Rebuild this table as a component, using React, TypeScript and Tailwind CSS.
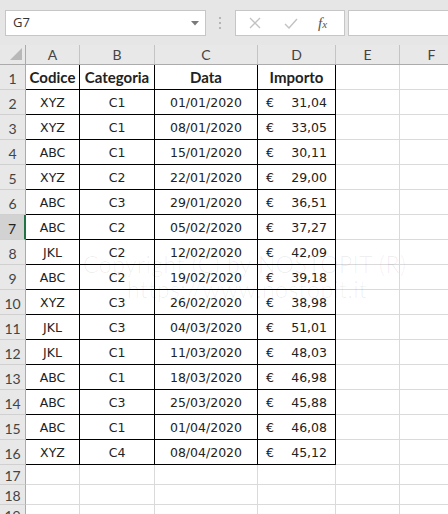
const rows = [
  ['XYZ', 'C1', '01/01/2020', '31,04'],
  ['XYZ', 'C1', '08/01/2020', '33,05'],
  ['ABC', 'C1', '15/01/2020', '30,11'],
  ['XYZ', 'C2', '22/01/2020', '29,00'],
  ['ABC', 'C3', '29/01/2020', '36,51'],
  ['ABC', 'C2', '05/02/2020', '37,27'],
  ['JKL', 'C2', '12/02/2020', '42,09'],
  ['ABC', 'C2', '19/02/2020', '39,18'],
  ['XYZ', 'C3', '26/02/2020', '38,98'],
  ['JKL', 'C3', '04/03/2020', '51,01'],
  ['JKL', 'C1', '11/03/2020', '48,03'],
  ['ABC', 'C1', '18/03/2020', '46,98'],
  ['ABC', 'C3', '25/03/2020', '45,88'],
  ['ABC', 'C1', '01/04/2020', '46,08'],
  ['XYZ', 'C4', '08/04/2020', '45,12'],
]

const letters = ['A', 'B', 'C', 'D', 'E', 'F']
const widths = ['w-[54px]', 'w-[75px]', 'w-[103px]', 'w-[78px]', 'w-[64px]', 'w-[64px]']

function RowHead({ n, selected }: { n: number; selected?: boolean }) {
  return (
    <div
      className={`w-[26px] shrink-0 flex items-center justify-center pt-[2px] text-[14px] font-['Lato'] border-b border-[#d0d0d0] ${
        selected ? 'bg-[#d2d2d2] border-r-2 border-r-[#217346] text-[#222]' : 'bg-[#e8e8e8] border-r border-r-[#ababab] text-[#444]'
      }`}
    >
      {n}
    </div>
  )
}

function EmptyCells({ from }: { from: number }) {
  return (
    <>
      {widths.slice(from).map((w, i) => (
        <div key={i} className={`${w} shrink-0 border-r border-b border-[#dadada]`} />
      ))}
    </>
  )
}

export default function App() {
  return (
    <div className="w-[448px] h-[514px] overflow-hidden bg-white relative font-['DejaVu_Sans'] text-[#222]">
      {/* Formula bar */}
      <div className="h-[45px] bg-[#e6e6e6] flex items-start pt-[10px] pl-[5px]">
        <div className="w-[201px] h-[26px] bg-white border border-[#c6c6c6] flex items-center justify-between pl-[7px] pr-[6px]">
          <span className="text-[13px] font-['Open_Sans'] text-[#333]">G7</span>
          <svg width="8" height="5" viewBox="0 0 8 5">
            <polygon points="0,0 8,0 4,4.5" fill="#7a7a7a" />
          </svg>
        </div>
        <div className="ml-[13px] mt-[7px] flex flex-col gap-[3px]">
          <div className="w-[2px] h-[2px] bg-[#b5b5b5]" />
          <div className="w-[2px] h-[2px] bg-[#b5b5b5]" />
          <div className="w-[2px] h-[2px] bg-[#b5b5b5]" />
        </div>
        <div className="ml-[14px] w-[110px] h-[26px] bg-white border border-[#c6c6c6] flex items-center">
          <svg className="ml-[13px]" width="12" height="12" viewBox="0 0 12 12">
            <path d="M1 1 L11 11 M11 1 L1 11" stroke="#c2c2c2" strokeWidth="1.3" />
          </svg>
          <svg className="ml-[23px]" width="14" height="11" viewBox="0 0 14 11">
            <path d="M1 6 L5 10 L13 1" stroke="#c2c2c2" strokeWidth="1.4" fill="none" />
          </svg>
          <span className="ml-[20px] font-['Liberation_Serif'] italic text-[15px] text-[#555] leading-none">
            f<span className="text-[11px]">x</span>
          </span>
        </div>
        <div className="ml-[3px] flex-1 h-[26px] bg-white border border-[#c6c6c6] border-r-0" />
      </div>

      {/* Column headers */}
      <div className="flex h-[20px] bg-[#e8e8e8] border-b border-[#ababab]">
        <div className="w-[26px] shrink-0 border-r border-[#ababab] relative">
          <svg className="absolute left-[10px] top-[3px]" width="12" height="12" viewBox="0 0 12 12">
            <polygon points="12,0 12,12 0,12" fill="#b8b8b8" />
          </svg>
        </div>
        {letters.map((l, i) => (
          <div key={l} className={`${widths[i]} shrink-0 border-r border-[#c4c4c4] flex items-center justify-center text-[14px] font-['Lato'] text-[#444]`}>
            {l}
          </div>
        ))}
      </div>

      {/* Header row */}
      <div className="flex h-[25px]">
        <RowHead n={1} />
        <div className="w-[54px] shrink-0 border-r border-b border-black flex items-center justify-center font-['Lato'] font-bold text-[15px] pt-[1px]">Codice</div>
        <div className="w-[75px] shrink-0 border-r border-b border-black flex items-center justify-center font-['Lato'] font-bold text-[15px] pt-[1px]">Categoria</div>
        <div className="w-[103px] shrink-0 border-r border-b border-black flex items-center justify-center font-['Lato'] font-bold text-[15px] pt-[1px]">Data</div>
        <div className="w-[78px] shrink-0 border-r border-b border-black flex items-center justify-center font-['Lato'] font-bold text-[15px] pt-[1px]">Importo</div>
        <EmptyCells from={4} />
      </div>

      {rows.map((r, i) => (
        <div key={i} className="flex h-[25px] text-[12.5px]">
          <RowHead n={i + 2} selected={i + 2 === 7} />
          <div className="w-[54px] shrink-0 border-r border-b border-black flex items-center justify-center pt-[2px]">{r[0]}</div>
          <div className="w-[75px] shrink-0 border-r border-b border-black flex items-center justify-center pt-[2px]">{r[1]}</div>
          <div className="w-[103px] shrink-0 border-r border-b border-black flex items-center justify-center pt-[2px]">{r[2]}</div>
          <div className="w-[78px] shrink-0 border-r border-b border-black flex items-center justify-between pl-[8px] pr-[8px] pt-[2px]">
            <span>€</span>
            <span>{r[3]}</span>
          </div>
          <EmptyCells from={4} />
        </div>
      ))}

      {[17, 18, 19].map((n) => (
        <div key={n} className="flex h-[20px]">
          <RowHead n={n} />
          <EmptyCells from={0} />
        </div>
      ))}

      {/* Watermark */}
      <div className="absolute left-[83px] top-[252px] pointer-events-none font-['Lato'] font-light text-[#000]/[0.07] text-[23px] leading-[25px] tracking-[0.5px]">
        <div>Copyright (C) by NOSTOPIT (R)</div>
        <div className="pl-[44px]">https://www.nostopit.it</div>
      </div>
    </div>
  )
}
